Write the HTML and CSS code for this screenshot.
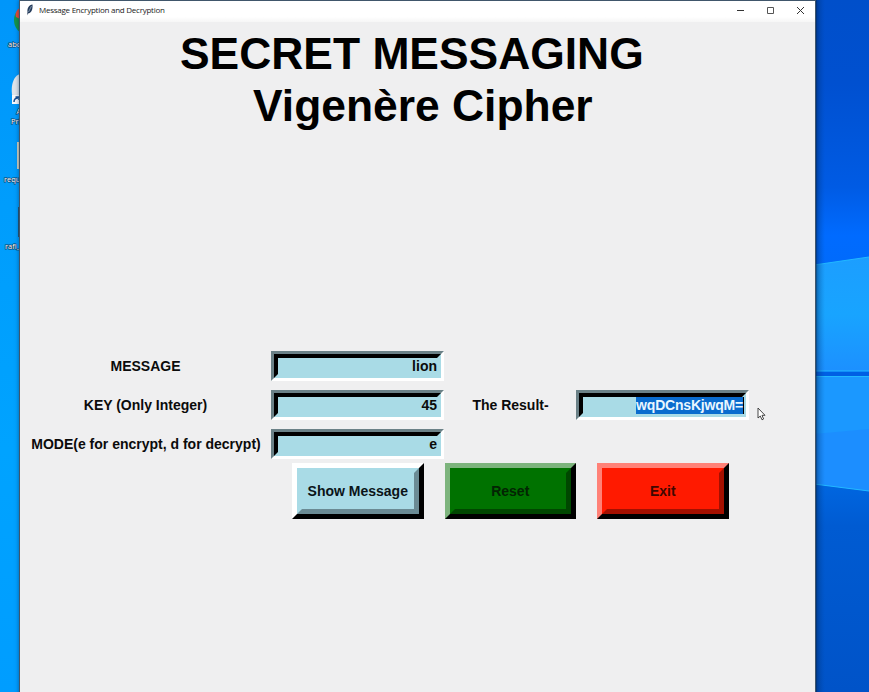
FILE: index.html
```html
<!DOCTYPE html>
<html lang="en">
<head>
<meta charset="utf-8">
<title>Message Encryption and Decryption</title>
<link rel="stylesheet" href="styles.css">
</head>
<body>
<div class="desktop">
  <svg class="wallpaper" width="55" height="692" viewBox="814 0 55 692">
    <defs>
      <linearGradient id="sky" x1="0" y1="0" x2="0" y2="1">
        <stop offset="0" stop-color="#004fca"/>
        <stop offset=".12" stop-color="#0050d0"/>
        <stop offset=".27" stop-color="#005be4"/>
        <stop offset=".34" stop-color="#006bff"/>
        <stop offset=".7" stop-color="#0066e0"/>
        <stop offset=".76" stop-color="#005bd2"/>
        <stop offset="1" stop-color="#0053c8"/>
      </linearGradient>
      <linearGradient id="pane" x1="0" y1="0" x2="0" y2="1">
        <stop offset="0" stop-color="#1c9eff"/>
        <stop offset=".5" stop-color="#18a4ff"/>
        <stop offset="1" stop-color="#1c90ff"/>
      </linearGradient>
      <linearGradient id="edge">
        <stop offset="0" stop-color="#00193c" stop-opacity=".8"/>
        <stop offset=".25" stop-color="#002a60" stop-opacity=".3"/>
        <stop offset="1" stop-color="#003a80" stop-opacity="0"/>
      </linearGradient>
    </defs>
    <path fill="url(#sky)" d="M814 0h55v692h-55z"/>
    <path fill="url(#pane)" d="M814 265l55-8v114h-55z"/>
    <path fill="#1b98ff" d="M814 377h55v114l-55-7z"/>
    <path fill="#1c8eff" d="M814 434l55-5v62l-55-7z"/>
    <path fill="#0060e4" d="M814 372h55v4h-55z"/>
    <path fill="none" stroke="#22b8ff" d="M814 265l55-8M814 371h55M814 376.500h55M814 484l55 7"/>
    <path fill="url(#edge)" d="M815 0h10v692h-10z"/>
  </svg>
  <svg class="icons" width="20" height="260" viewBox="0 0 20 260">
    <path fill="#16934b" d="M20 9c-8 4-8 18 0 23z"/>
    <path fill="#e74a38" d="M20 8c-4 2-5 6-4 9l4 2z"/>
    <path fill="#dfe5ea" d="M20 74c-10 3-10 22-5 29h5z"/>
    <path fill="#f6f8fa" d="M12 95h8v9h-8z"/>
    <path fill="none" stroke="#174e91" stroke-width="1.500" d="M14 102q0-4 4-4M15.500 97H19v3"/>
    <path fill="#d5d2bd" d="M17 142h3v27h-3z"/>
    <path fill="#285774" d="M18 207h2v30h-2z"/>
    <g class="icon-text">
      <text x="8" y="47">abc</text>
      <text x="16.500" y="114">A</text>
      <text x="11" y="124">Pri</text>
      <text x="4" y="182">requ</text>
      <text x="5" y="249">rafi_</text>
    </g>
  </svg>
  <div class="window">
    <header class="titlebar">
      <svg width="8" height="12" viewBox="0 0 8 12"><path fill="#263c5b" d="M6.500.5C3 1 1 4 1.500 8L1 11.500l1-2C5 9 7 6 6.500.5z"/><path stroke="#9eb4cc" stroke-width=".7" d="M5.500 2L2.500 8"/></svg>
      <span class="caption">Message Encryption and Decryption</span>
      <svg class="controls" width="70" height="12" viewBox="0 0 70 12" fill="none" stroke="#333"><path d="M2 6.500h7"/><path stroke="#555" d="M32.500 3.500h6v6h-6z"/><path d="M62 3l7 7M69 3l-7 7"/></svg>
    </header>
    <h1 class="heading"><span class="name">SECRET MESSAGING</span><span class="cipher">Vigenère Cipher</span></h1>
    <main class="form">
      <label>MESSAGE</label>
      <div class="field"><div>lion</div></div>
      <span></span><span></span>
      <label>KEY (Only Integer)</label>
      <div class="field"><div>45</div></div>
      <label>The Result-</label>
      <div class="field"><div><span class="selected">wqDCnsKjwqM=</span></div></div>
      <label>MODE(e for encrypt, d for decrypt)</label>
      <div class="field"><div>e</div></div>
    </main>
    <div class="buttons">
      <button class="show"><span>Show Message</span></button>
      <button class="reset"><span>Reset</span></button>
      <button class="exit"><span>Exit</span></button>
    </div>
  </div>
  <svg class="cursor" width="9" height="14" viewBox="0 0 9 14"><path fill="#fff" stroke="#333" stroke-width=".9" d="M1 1v10l2.300-2 1.700 3.800 1.600-.8L5 8.300h3z"/></svg>
</div>
</body>
</html>
```

FILE: styles.css
```css
* { box-sizing: border-box; }
body { margin: 0; overflow: hidden; }
.desktop {
  position: relative;
  width: 869px;
  height: 692px;
  padding: 1px 0 0 20px;
  overflow: hidden;
  background: linear-gradient(#0096fa, #009dfc 30%, #00a3ff 65%, #009dff);
  font-family: "Liberation Sans", Arial, sans-serif;
}
.wallpaper { position: absolute; left: 814px; top: 0; }
.icons { position: absolute; left: 0; top: 0; }
.icon-text {
  font: 7.5px "Open Sans", sans-serif;
  fill: #fff;
  stroke: #123b62;
  stroke-width: 1.2px;
  paint-order: stroke;
}
.window {
  position: relative;
  width: 795px;
  height: 700px;
  background: #efeff0;
  box-shadow: 0 0 0 1px #40566b, 0 0 4px 1px rgba(0, 30, 70, .5);
}
.titlebar {
  display: flex;
  align-items: center;
  height: 21px;
  padding: 0 10px 4px 6px;
  background: linear-gradient(#fff 75%, #f6f6f6);
}
.caption {
  margin-left: 5px;
  color: #222;
  font: 8px/12px "Open Sans", sans-serif;
  letter-spacing: -.25px;
  white-space: nowrap;
}
.controls { margin-left: auto; }
.heading {
  height: 329px;
  margin: 0;
  padding-top: 6px;
  color: #000;
  font-size: 44.4px;
  line-height: 52px;
}
.heading span { display: block; white-space: nowrap; }
.heading .name { padding-left: 160px; }
.heading .cipher { padding-left: 233px; }
.form {
  display: grid;
  grid-template-columns: 251px 173px 132px 173px;
  grid-auto-rows: 30px;
  row-gap: 9px;
  align-items: center;
  color: #0b0b0b;
  font-weight: bold;
  font-size: 14px;
}
.form label { text-align: center; white-space: nowrap; }
.form .field + label { padding-left: 1px; }
.field {
  height: 30px;
  border: 3px solid;
  border-color: #6b8187 #fff #fff #6b8187;
}
.field > div {
  height: 24px;
  border: 4px solid;
  border-color: #000 #a9dbe6 #a9dbe6 #000;
  background: #a9dbe6;
  line-height: 17px;
  text-align: right;
}
.selected {
  display: inline-block;
  height: 17px;
  margin-right: -2px;
  border-right: 1px solid #000;
  background: #0a6cce;
  color: #e8f6ff;
  letter-spacing: -.2px;
}
.buttons {
  display: flex;
  gap: 21px;
  padding: 4px 0 0 272px;
}
.buttons button {
  width: 131.500px;
  height: 56px;
  padding: 0;
  border: 5px solid;
  font: bold 14px "Liberation Sans", Arial, sans-serif;
  color: #0b1418;
}
.buttons span {
  display: flex;
  align-items: center;
  justify-content: center;
  height: 46px;
  border: 5px solid;
  white-space: nowrap;
}
.buttons .show { border-color: #fff #000 #000 #fff; background: #a9dbe6; }
.show span { border-color: #a9dbe6 #6b8b94 #6b8b94 #a9dbe6; }
.buttons .reset { border-color: #7db47d #000 #000 #7db47d; background: #007200; color: #032403; }
.reset span { border-color: #007200 #004700 #004700 #007200; }
.buttons .exit { border-color: #ff8177 #000 #000 #ff8177; background: #ff1a00; color: #400700; }
.exit span { border-color: #ff1a00 #a51000 #a51000 #ff1a00; }
.cursor { position: absolute; left: 757px; top: 407px; }
```
